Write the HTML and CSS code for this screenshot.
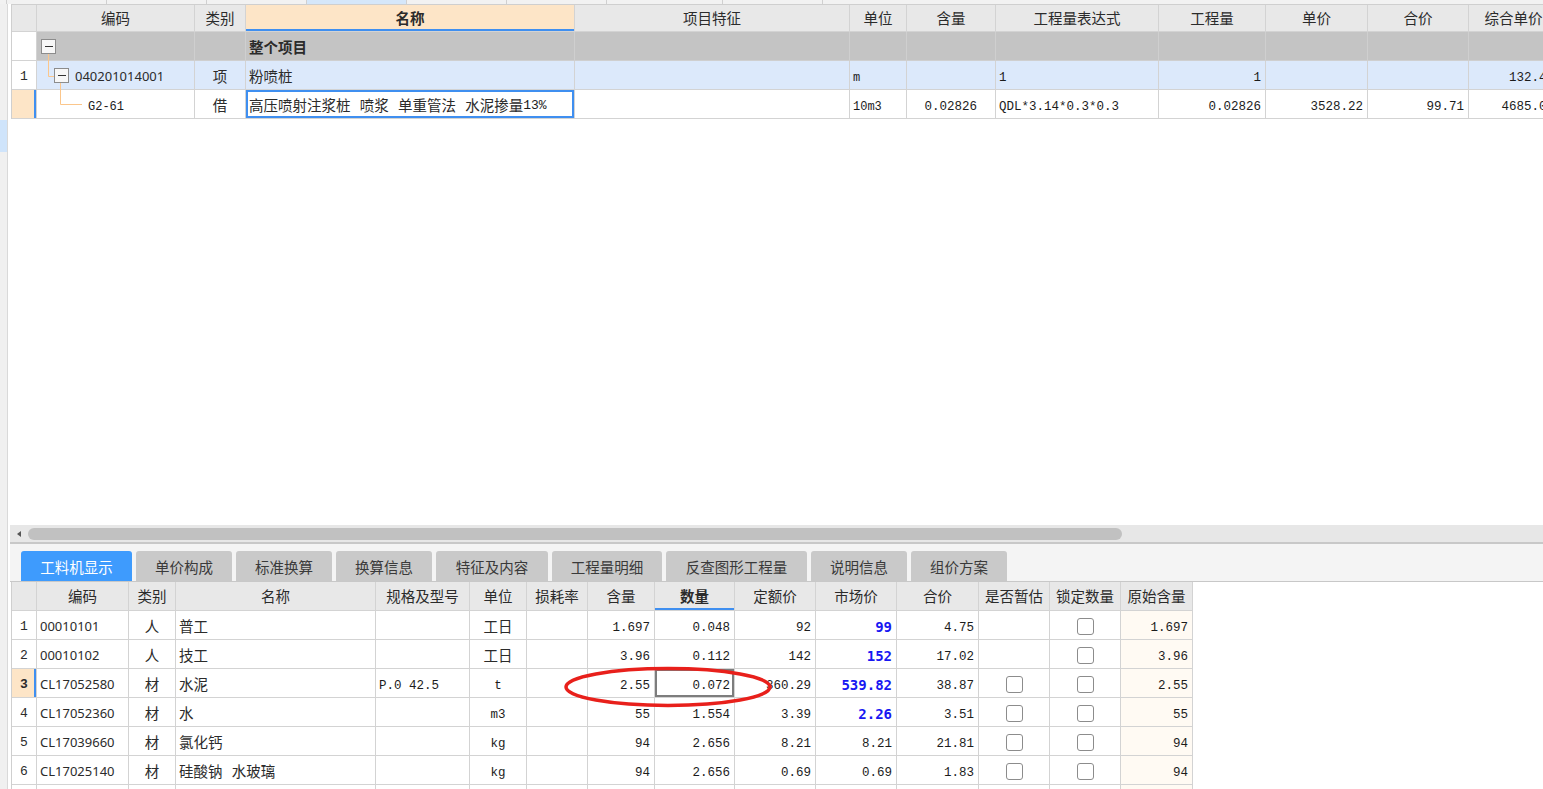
FILE: index.html
```html
<!DOCTYPE html>
<html lang="zh">
<head>
<meta charset="utf-8">
<title>工料机显示</title>
<link rel="stylesheet" href="styles.css">
</head>
<body>
<div class="topstrip">
  <span class="w7"></span><span class="w100"></span><span class="w100"></span><span class="w100"></span><span class="w100 blue"></span><span class="w100"></span><span class="w100"></span><span class="w116"></span><span class="w100"></span><span class="rest"></span>
</div>
<div class="app">
  <div class="side"><div class="mark"></div></div>
  <div class="main">
    <div class="tgrid">
      <svg class="tree" width="120" height="115" viewBox="0 0 120 115">
        <path d="M36.5 49 V71.5 H42 M48.5 78 V99.5 H70" fill="none" stroke="#fbc68b" stroke-width="1"/>
      </svg>
      <!-- header -->
      <div class="c h"></div>
      <div class="c h">编码</div>
      <div class="c h">类别</div>
      <div class="c h hsel">名称</div>
      <div class="c h">项目特征</div>
      <div class="c h">单位</div>
      <div class="c h">含量</div>
      <div class="c h">工程量表达式</div>
      <div class="c h">工程量</div>
      <div class="c h">单价</div>
      <div class="c h">合价</div>
      <div class="c h">综合单价</div>
      <!-- 整个项目 -->
      <div class="c rn"></div>
      <div class="c g code pad4"><span class="box"></span></div>
      <div class="c g"></div>
      <div class="c g b">整个项目</div>
      <div class="c g"></div><div class="c g"></div><div class="c g"></div><div class="c g"></div>
      <div class="c g"></div><div class="c g"></div><div class="c g"></div><div class="c g"></div>
      <!-- row 1 -->
      <div class="c rn">1</div>
      <div class="c bl code pad17"><span class="box"></span><span class="codetxt">040201014001</span></div>
      <div class="c bl ctr">项</div>
      <div class="c bl">粉喷桩</div>
      <div class="c bl"></div>
      <div class="c bl mono sm">m</div>
      <div class="c bl"></div>
      <div class="c bl mono">1</div>
      <div class="c bl mono r">1</div>
      <div class="c bl"></div>
      <div class="c bl"></div>
      <div class="c bl mono r">132.44</div>
      <!-- row 2 -->
      <div class="c rn cur"></div>
      <div class="c mono pad51">G2-61</div>
      <div class="c ctr">借</div>
      <div class="c cn csel">高压喷射注浆桩 喷浆 单重管法 水泥掺量<span class="mono pct">13%</span></div>
      <div class="c"></div>
      <div class="c mono sm">10m3</div>
      <div class="c mono r pr18">0.02826</div>
      <div class="c mono">QDL*3.14*0.3*0.3</div>
      <div class="c mono r">0.02826</div>
      <div class="c mono r">3528.22</div>
      <div class="c mono r">99.71</div>
      <div class="c mono r">4685.03</div>
    </div>

    <div class="blank"></div>

    <div class="hscroll">
      <span class="arrow"></span>
      <div class="thumb"></div>
    </div>

    <div class="tabbar">
      <div class="tab on w111">工料机显示</div>
      <div class="tab w96">单价构成</div>
      <div class="tab w96">标准换算</div>
      <div class="tab w96">换算信息</div>
      <div class="tab w112">特征及内容</div>
      <div class="tab w110">工程量明细</div>
      <div class="tab w141">反查图形工程量</div>
      <div class="tab w96">说明信息</div>
      <div class="tab w96">组价方案</div>
    </div>

    <div class="bgrid">
      <svg class="ring" width="220" height="50" viewBox="0 0 220 50">
        <ellipse cx="110" cy="24" rx="102" ry="18.5" fill="none" stroke="#e8201b" stroke-width="3.5"/>
      </svg>
      <div class="c bh"></div>
      <div class="c bh">编码</div>
      <div class="c bh">类别</div>
      <div class="c bh">名称</div>
      <div class="c bh">规格及型号</div>
      <div class="c bh">单位</div>
      <div class="c bh">损耗率</div>
      <div class="c bh">含量</div>
      <div class="c bh hsel">数量</div>
      <div class="c bh">定额价</div>
      <div class="c bh">市场价</div>
      <div class="c bh">合价</div>
      <div class="c bh">是否暂估</div>
      <div class="c bh">锁定数量</div>
      <div class="c bh">原始含量</div>

      <div class="c rn">1</div>
      <div class="c code">00010101</div>
      <div class="c ctr">人</div>
      <div class="c">普工</div>
      <div class="c"></div>
      <div class="c ctr">工日</div>
      <div class="c"></div>
      <div class="c mono r">1.697</div>
      <div class="c mono r">0.048</div>
      <div class="c mono r">92</div>
      <div class="c blue r">99</div>
      <div class="c mono r">4.75</div>
      <div class="c ctr"></div>
      <div class="c ctr"><span class="cb"></span></div>
      <div class="c mono r orig">1.697</div>

      <div class="c rn">2</div>
      <div class="c code">00010102</div>
      <div class="c ctr">人</div>
      <div class="c">技工</div>
      <div class="c"></div>
      <div class="c ctr">工日</div>
      <div class="c"></div>
      <div class="c mono r">3.96</div>
      <div class="c mono r">0.112</div>
      <div class="c mono r">142</div>
      <div class="c blue r">152</div>
      <div class="c mono r">17.02</div>
      <div class="c ctr"></div>
      <div class="c ctr"><span class="cb"></span></div>
      <div class="c mono r orig">3.96</div>

      <div class="c rn cur b">3</div>
      <div class="c code">CL17052580</div>
      <div class="c ctr">材</div>
      <div class="c">水泥</div>
      <div class="c mono">P.0 42.5</div>
      <div class="c mono ctr">t</div>
      <div class="c"></div>
      <div class="c mono r">2.55</div>
      <div class="c mono r dsel">0.072</div>
      <div class="c mono r">360.29</div>
      <div class="c blue r">539.82</div>
      <div class="c mono r">38.87</div>
      <div class="c ctr"><span class="cb"></span></div>
      <div class="c ctr"><span class="cb"></span></div>
      <div class="c mono r orig">2.55</div>

      <div class="c rn">4</div>
      <div class="c code">CL17052360</div>
      <div class="c ctr">材</div>
      <div class="c">水</div>
      <div class="c"></div>
      <div class="c mono ctr">m3</div>
      <div class="c"></div>
      <div class="c mono r">55</div>
      <div class="c mono r">1.554</div>
      <div class="c mono r">3.39</div>
      <div class="c blue r">2.26</div>
      <div class="c mono r">3.51</div>
      <div class="c ctr"><span class="cb"></span></div>
      <div class="c ctr"><span class="cb"></span></div>
      <div class="c mono r orig">55</div>

      <div class="c rn">5</div>
      <div class="c code">CL17039660</div>
      <div class="c ctr">材</div>
      <div class="c">氯化钙</div>
      <div class="c"></div>
      <div class="c mono ctr">kg</div>
      <div class="c"></div>
      <div class="c mono r">94</div>
      <div class="c mono r">2.656</div>
      <div class="c mono r">8.21</div>
      <div class="c mono r">8.21</div>
      <div class="c mono r">21.81</div>
      <div class="c ctr"><span class="cb"></span></div>
      <div class="c ctr"><span class="cb"></span></div>
      <div class="c mono r orig">94</div>

      <div class="c rn">6</div>
      <div class="c code">CL17025140</div>
      <div class="c ctr">材</div>
      <div class="c cn">硅酸钠 水玻璃</div>
      <div class="c"></div>
      <div class="c mono ctr">kg</div>
      <div class="c"></div>
      <div class="c mono r">94</div>
      <div class="c mono r">2.656</div>
      <div class="c mono r">0.69</div>
      <div class="c mono r">0.69</div>
      <div class="c mono r">1.83</div>
      <div class="c ctr"><span class="cb"></span></div>
      <div class="c ctr"><span class="cb"></span></div>
      <div class="c mono r orig">94</div>

      <div class="c rn"></div>
      <div class="c"></div><div class="c"></div><div class="c"></div><div class="c"></div>
      <div class="c"></div><div class="c"></div><div class="c"></div><div class="c"></div>
      <div class="c"></div><div class="c"></div><div class="c"></div><div class="c"></div>
      <div class="c"></div><div class="c orig"></div>
    </div>
  </div>
</div>
</body>
</html>
```

FILE: styles.css
```css
* { box-sizing: border-box; }
html, body { margin: 0; padding: 0; }
body {
  width: 1543px;
  height: 789px;
  overflow: hidden;
  background: #ffffff;
  font-family: "Noto Sans CJK SC", "Noto Sans", sans-serif;
  font-size: 14.5px;
  color: #2b2b2b;
}

/* thin strip at top */
.topstrip { display: flex; height: 4px; background: #f2f2f2; }
.topstrip span { height: 4px; border-right: 1px solid #d0d0d0; flex: none; }
.topstrip .w7 { width: 7px; }
.topstrip .w100 { width: 100px; }
.topstrip .w116 { width: 116px; }
.topstrip .blue { background: #d5e7fa; }
.topstrip .rest { flex: 1; border-right: 0; }

.app { display: flex; height: 785px; }
.side {
  width: 8px;
  flex: none;
  background: #f0f0f0;
  border-right: 1px solid #d9d9d9;
  padding-top: 116px;
}
.side .mark { height: 32px; background: #cfe4fb; }

.main {
  flex: 1;
  min-width: 0;
  padding-left: 3px;
  display: flex;
  flex-direction: column;
  overflow: hidden;
}

/* generic cell */
.c {
  height: 29px;
  border-right: 1px solid #d3d3d3;
  border-bottom: 1px solid #d3d3d3;
  display: flex;
  align-items: center;
  padding: 3px 3px 0 3px;
  white-space: nowrap;
  overflow: hidden;
  line-height: 1;
}
.ctr { justify-content: center; }
.r { justify-content: flex-end; padding-right: 4px; }
.b { font-weight: bold; }
.mono { font-family: "Liberation Mono", monospace; font-size: 12.5px; color: #1c1c1c; padding-top: 6px; }
.mono.sm { font-size: 12px; }
.pct { font-size: 13px; padding-top: 0; }
.cn { word-spacing: 6px; }
.code { font-family: "Noto Sans", sans-serif; font-size: 13px; }
.codetxt { margin-left: 6px; }
.pad4 { padding-left: 4px; }
.pad17 { padding-left: 17px; }
.pad51 { padding-left: 51px; font-size: 12px; }
.pr18 { padding-right: 18px; }

/* top grid */
.tgrid {
  position: relative;
  align-self: flex-start;
  display: grid;
  grid-template-columns: 25px 158px 51px 329px 275px 57px 89px 163px 107px 102px 101px 90px;
  border-left: 1px solid #cfcfcf;
  border-top: 1px solid #cfcfcf;
  flex: none;
}
.tree { position: absolute; left: 0; top: 0; pointer-events: none; }
.h { height: 27px; background: #e8e8e8; justify-content: center; padding-top: 0; }
.hsel {
  background: #fde5c7;
  font-weight: bold;
  box-shadow: inset 0 -2px 0 #3f8ff0;
}
.rn {
  justify-content: center;
  font-family: "Liberation Mono", monospace;
  font-size: 13px;
  background: #ffffff;
  padding: 2px 0 0 0;
}
.rn.cur { background: #fde5c7; box-shadow: inset -2px 0 0 #3f8ff0; }
.g { background: #c4c4c4; border-right-color: #cfcfcf; border-bottom-color: #cfcfcf; }
.bl { background: #dce9fb; }
.csel { box-shadow: inset 0 0 0 2px #3f8ff0; }

.box {
  width: 15px;
  height: 15px;
  flex: none;
  border: 1px solid #8c8c8c;
  background: #f7f7f7;
  display: inline-flex;
  align-items: center;
  justify-content: center;
}
.box::after { content: ""; width: 8px; height: 1px; background: #333; }
.g.code, .bl.code { padding-top: 0; }
.bl.code .codetxt { padding-top: 2px; }

.blank { height: 406px; flex: none; }

/* horizontal scrollbar */
.hscroll {
  height: 19px;
  flex: none;
  margin-left: -1px;
  background: #e7e7e7;
  border-bottom: 2px solid #c8c8c8;
  display: flex;
  align-items: center;
  padding-left: 7px;
}
.arrow {
  width: 0;
  height: 0;
  border-top: 3.5px solid transparent;
  border-bottom: 3.5px solid transparent;
  border-right: 4px solid #555;
  flex: none;
}
.thumb {
  margin-left: 7px;
  width: 1094px;
  height: 12px;
  border-radius: 6px;
  background: #c1c1c1;
  flex: none;
}

/* tabs */
.tabbar {
  height: 38px;
  flex: none;
  margin-left: -1px;
  padding: 7px 0 0 11px;
  background: #f4f4f4;
  border-bottom: 1px solid #c8c8c8;
  display: flex;
  gap: 4px;
}
.tab {
  height: 30px;
  flex: none;
  border-radius: 3px 3px 0 0;
  background: #c9c9c9;
  color: #3a3a3a;
  display: flex;
  align-items: center;
  justify-content: center;
}
.tab.on { background: #3e9bfd; color: #ffffff; }
.w111 { width: 111px; }
.w96 { width: 96px; }
.w112 { width: 112px; }
.w110 { width: 110px; }
.w141 { width: 141px; }

/* bottom grid */
.bgrid {
  position: relative;
  align-self: flex-start;
  display: grid;
  grid-template-columns: 25px 92px 47px 200px 94px 57px 61px 67px 80px 81px 81px 82px 71px 71px 72px;
  border-left: 1px solid #cfcfcf;
  flex: none;
}
.ring { position: absolute; left: 546px; top: 81px; pointer-events: none; z-index: 2; }
.bh { background: #e8e8e8; justify-content: center; padding-top: 1px; }
.blue {
  color: #1717f2;
  font-weight: bold;
  font-family: "DejaVu Sans Mono", monospace;
  font-size: 14px;
}
.dsel { box-shadow: inset 0 0 0 2px #7d7d7d; }
.orig { background: #fffaf3; }
.cb {
  width: 17px;
  height: 17px;
  border: 1px solid #8c8c8c;
  border-radius: 3px;
  background: #ffffff;
}
```
